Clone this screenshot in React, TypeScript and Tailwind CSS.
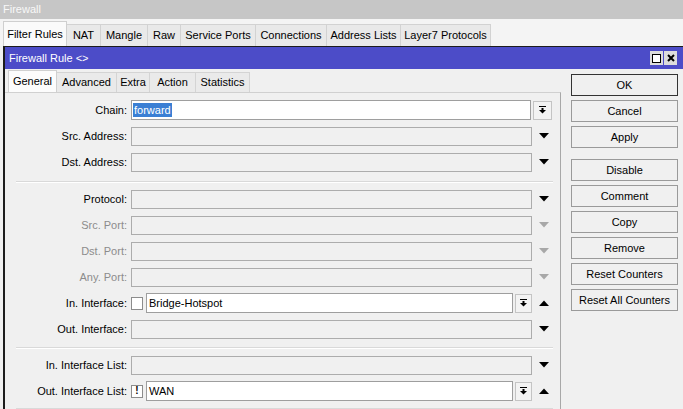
import { ReactNode } from "react";

const topTabs = [
  { label: "Filter Rules", w: 64 },
  { label: "NAT", w: 34 },
  { label: "Mangle", w: 47 },
  { label: "Raw", w: 33 },
  { label: "Service Ports", w: 75 },
  { label: "Connections", w: 71 },
  { label: "Address Lists", w: 74 },
  { label: "Layer7 Protocols", w: 90 },
];

const ruleTabs = [
  { label: "General", w: 49 },
  { label: "Advanced", w: 60 },
  { label: "Extra", w: 33 },
  { label: "Action", w: 46 },
  { label: "Statistics", w: 54 },
];

const buttons = [
  "OK",
  "Cancel",
  "Apply",
  "Disable",
  "Comment",
  "Copy",
  "Remove",
  "Reset Counters",
  "Reset All Counters",
];

function DownTri({ gray }: { gray?: boolean }) {
  return (
    <svg width="10" height="6" viewBox="0 0 10 6">
      <polygon points="0,0 10,0 5,5.5" fill={gray ? "#a8a8a8" : "#000"} />
    </svg>
  );
}

function UpTri() {
  return (
    <svg width="10" height="6" viewBox="0 0 10 6">
      <polygon points="0,6 10,6 5,0.5" fill="#000" />
    </svg>
  );
}

function ListIcon() {
  return (
    <svg width="7" height="8" viewBox="0 0 7 8">
      <rect x="0" y="0" width="7" height="1" fill="#000" />
      <rect x="2.5" y="2" width="2" height="2" fill="#000" />
      <polygon points="0,4 7,4 3.5,7.5" fill="#000" />
    </svg>
  );
}

function SmallBtn({ w }: { w: string }) {
  return (
    <div className={`${w} h-[19px] flex items-center justify-center border border-[#c4c4c4] bg-[#f3f3f3]`}>
      <ListIcon />
    </div>
  );
}

function Row({ label, disabled, children }: { label: string; disabled?: boolean; children: ReactNode }) {
  return (
    <div className="flex items-center h-[26px]">
      <div className={`w-[122px] mr-[4px] text-right ${disabled ? "text-[#8c8c8c]" : "text-black"}`}>{label}</div>
      {children}
    </div>
  );
}

function DropField({ label, disabled }: { label: string; disabled?: boolean }) {
  return (
    <Row label={label} disabled={disabled}>
      <div className="w-[401px] h-[19px] border border-[#acacac] bg-[#f0f0f0]" />
      <div className="w-[24px] flex justify-center">
        <DownTri gray={disabled} />
      </div>
    </Row>
  );
}

function IfaceField({ label, mark, value }: { label: string; mark?: string; value: string }) {
  return (
    <Row label={label}>
      <div className="w-[12px] h-[13px] border border-[#8c8c8c] bg-white flex items-center justify-center text-[10px] font-bold leading-none">
        {mark}
      </div>
      <div className="w-[367px] h-[20px] ml-[3px] border border-[#9e9e9e] bg-white flex items-center pl-[2px]">{value}</div>
      <div className="ml-[2px]">
        <SmallBtn w="w-[17px]" />
      </div>
      <div className="w-[24px] flex justify-center">
        <UpTri />
      </div>
    </Row>
  );
}

function Separator({ className }: { className: string }) {
  return <div className={`ml-[11px] w-[537px] border-t border-[#d9d9d9] border-b border-b-white ${className}`} />;
}

export default function App() {
  return (
    <div className="w-[683px] h-[409px] overflow-hidden bg-[#f0f0f0] text-[11px] leading-none text-black font-['Liberation_Sans',Arial,sans-serif]">
      <div className="h-[19px] bg-[#c6c6c6] text-[#f8f8f8] flex items-center pl-[3px]">Firewall</div>
      <div className="h-[27px] flex items-end pl-[3px] bg-[#f4f4f4]">
        {topTabs.map((t, i) => (
          <div
            key={t.label}
            style={{ width: t.w }}
            className={
              i === 0
                ? "h-[25px] flex items-center justify-center bg-[#fafafa] border border-b-0 border-[#cfcfcf]"
                : "h-[22px] flex items-center justify-center bg-[#e9e9e9] border-r border-t border-[#d2d2d2]"
            }
          >
            {t.label}
          </div>
        ))}
      </div>

      <div className="ml-[3px] border-l-2 border-t border-[#1c1c1c] flex flex-col">
        <div className="h-[22px] bg-[#4c4cc8] flex items-center justify-between pl-[4px] pr-[6px] text-white">
          <span>Firewall Rule &lt;&gt;</span>
          <div className="flex gap-[1px]">
            <div className="w-[13px] h-[14px] bg-[#dcdcdc] flex items-center justify-center">
              <div className="w-[9px] h-[9px] border border-black bg-white" />
            </div>
            <div className="w-[13px] h-[14px] bg-[#dcdcdc] flex items-center justify-center">
              <svg width="8" height="8" viewBox="0 0 8 8">
                <path d="M1 1 L7 7 M7 1 L1 7" stroke="#000" strokeWidth="2" />
              </svg>
            </div>
          </div>
        </div>

        <div className="flex">
          <div className="w-[556px] flex flex-col">
            <div className="h-[23px] flex items-end pl-[3px]">
              {ruleTabs.map((t, i) => (
                <div
                  key={t.label}
                  style={{ width: t.w }}
                  className={
                    i === 0
                      ? "h-[22px] flex items-center justify-center bg-[#fcfcfc] border border-b-0 border-[#d0d0d0]"
                      : "h-[20px] flex items-center justify-center bg-[#eaeaea] border-r border-t border-[#d4d4d4]"
                  }
                >
                  {t.label}
                </div>
              ))}
            </div>
            <div className="border-t border-r border-[#d0d0d0] h-[330px] pt-[4px] border-r-[#a8a8a8]">
              <Row label="Chain:">
                <div className="w-[400px] h-[20px] border border-[#9e9e9e] bg-white flex items-center pl-[1px]">
                  <span className="bg-[#3a7fd4] text-white px-[1px] h-[14px] flex items-center">forward</span>
                </div>
                <div className="ml-[2px]">
                  <SmallBtn w="w-[19px]" />
                </div>
              </Row>
              <DropField label="Src. Address:" />
              <DropField label="Dst. Address:" />
              <Separator className="mt-[6px] mb-[3px]" />
              <DropField label="Protocol:" />
              <DropField label="Src. Port:" disabled />
              <DropField label="Dst. Port:" disabled />
              <DropField label="Any. Port:" disabled />
              <IfaceField label="In. Interface:" value="Bridge-Hotspot" />
              <DropField label="Out. Interface:" />
              <Separator className="mt-[5px] mb-[3px]" />
              <DropField label="In. Interface List:" />
              <IfaceField label="Out. Interface List:" mark="!" value="WAN" />
              <Separator className="mt-[4px]" />
            </div>
          </div>

          <div className="ml-[10px] pt-[5px] flex flex-col gap-[4px]">
            {buttons.map((b, i) => (
              <div
                key={b}
                className={`w-[107px] h-[22px] flex items-center justify-center bg-[#f0f0f0] border ${
                  i === 0 ? "border-[#333333]" : "border-[#9a9a9a]"
                } ${i === 2 ? "mb-[7px]" : ""}`}
              >
                {b}
              </div>
            ))}
          </div>
        </div>
      </div>
    </div>
  );
}
